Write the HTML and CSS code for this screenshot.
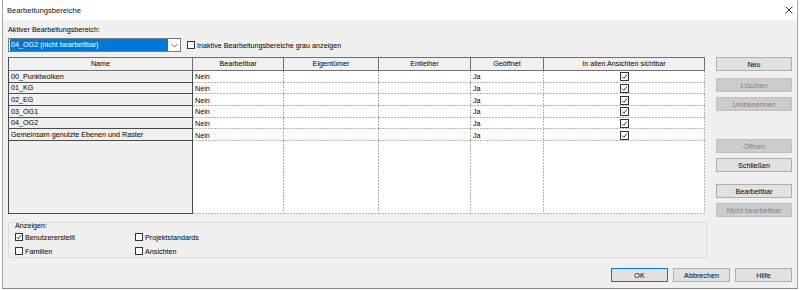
FILE: index.html
```html
<!DOCTYPE html>
<html lang="de">
<head>
<meta charset="utf-8">
<title>Bearbeitungsbereiche</title>
<link rel="stylesheet" href="styles.css">
</head>
<body>
<div class="window">
  <div class="titlebar">
    <span class="title">Bearbeitungsbereiche</span>
    <svg class="close" width="8" height="8" viewBox="0 0 8 8"><path d="M0.5 0.5 L7.5 7.5 M7.5 0.5 L0.5 7.5" stroke="#222" stroke-width="0.9" fill="none"/></svg>
  </div>
  <div class="content">
    <div class="label">Aktiver Bearbeitungsbereich:</div>
    <div class="toprow">
      <div class="combo">
        <span class="combo-sel">04_OG2 (nicht bearbeitbar)</span>
        <svg class="chev" width="7" height="5" viewBox="0 0 7 5"><path d="M0.5 1 L3.5 4 L6.5 1" stroke="#555" stroke-width="0.9" fill="none"/></svg>
      </div>
      <div class="check"><span class="box"></span><span>Inaktive Bearbeitungsbereiche grau anzeigen</span></div>
    </div>
    <div class="main">
      <div class="grid">
        <div class="hc first">Name</div>
        <div class="hc">Bearbeitbar</div>
        <div class="hc">Eigentümer</div>
        <div class="hc">Entleiher</div>
        <div class="hc">Geöffnet</div>
        <div class="hc">In allen Ansichten sichtbar</div>

        <div class="nc">00_Punktwolken</div><div class="dc">Nein</div><div class="dc"></div><div class="dc"></div><div class="dc">Ja</div><div class="dc cc"><span class="box tbox checked"><svg width="7" height="7" viewBox="0 0 7 7"><path d="M1 3.6 L2.8 5.4 L6 1.4" stroke="#222" stroke-width="0.9" fill="none"/></svg></span></div>
        <div class="nc">01_KG</div><div class="dc">Nein</div><div class="dc"></div><div class="dc"></div><div class="dc">Ja</div><div class="dc cc"><span class="box tbox checked"><svg width="7" height="7" viewBox="0 0 7 7"><path d="M1 3.6 L2.8 5.4 L6 1.4" stroke="#222" stroke-width="0.9" fill="none"/></svg></span></div>
        <div class="nc">02_EG</div><div class="dc">Nein</div><div class="dc"></div><div class="dc"></div><div class="dc">Ja</div><div class="dc cc"><span class="box tbox checked"><svg width="7" height="7" viewBox="0 0 7 7"><path d="M1 3.6 L2.8 5.4 L6 1.4" stroke="#222" stroke-width="0.9" fill="none"/></svg></span></div>
        <div class="nc">03_OG1</div><div class="dc">Nein</div><div class="dc"></div><div class="dc"></div><div class="dc">Ja</div><div class="dc cc"><span class="box tbox checked"><svg width="7" height="7" viewBox="0 0 7 7"><path d="M1 3.6 L2.8 5.4 L6 1.4" stroke="#222" stroke-width="0.9" fill="none"/></svg></span></div>
        <div class="nc">04_OG2</div><div class="dc">Nein</div><div class="dc"></div><div class="dc"></div><div class="dc">Ja</div><div class="dc cc"><span class="box tbox checked"><svg width="7" height="7" viewBox="0 0 7 7"><path d="M1 3.6 L2.8 5.4 L6 1.4" stroke="#222" stroke-width="0.9" fill="none"/></svg></span></div>
        <div class="nc">Gemeinsam genutzte Ebenen und Raster</div><div class="dc">Nein</div><div class="dc"></div><div class="dc"></div><div class="dc">Ja</div><div class="dc cc"><span class="box tbox checked"><svg width="7" height="7" viewBox="0 0 7 7"><path d="M1 3.6 L2.8 5.4 L6 1.4" stroke="#222" stroke-width="0.9" fill="none"/></svg></span></div>

        <div class="nc"></div><div class="dc"></div><div class="dc"></div><div class="dc"></div><div class="dc"></div><div class="dc"></div>
      </div>
      <div class="side">
        <div class="btn">Neu</div>
        <div class="btn dis gap7">Löschen</div>
        <div class="btn dis gap5">Umbenennen</div>
        <div class="btn dis gap28">Öffnen</div>
        <div class="btn gap5">Schließen</div>
        <div class="btn gap12">Bearbeitbar</div>
        <div class="btn dis gap5">Nicht bearbeitbar</div>
      </div>
    </div>
    <div class="group">
      <div class="group-label">Anzeigen:</div>
      <div class="group-grid">
        <div class="check"><span class="box checked"><svg width="6" height="6" viewBox="0 0 6 6"><path d="M0.8 3.1 L2.4 4.7 L5.2 1.2" stroke="#222" stroke-width="0.9" fill="none"/></svg></span><span>Benutzererstellt</span></div>
        <div class="check"><span class="box"></span><span>Projektstandards</span></div>
        <div class="check"><span class="box"></span><span>Familien</span></div>
        <div class="check"><span class="box"></span><span>Ansichten</span></div>
      </div>
    </div>
    <div class="footer">
      <div class="btn fbtn default">OK</div>
      <div class="btn fbtn">Abbrechen</div>
      <div class="btn fbtn">Hilfe</div>
    </div>
  </div>
</div>
</body>
</html>
```

FILE: styles.css
```css
html, body {
  margin: 0;
  padding: 0;
  background: #ffffff;
}
body {
  font-family: "Liberation Sans", Arial, sans-serif;
  font-size: 7.2px;
  color: #000;
  width: 800px;
  height: 290px;
  overflow: hidden;
}
.window {
  margin-left: 2px;
  width: 796px;
  height: 289px;
  box-sizing: border-box;
  border-left: 1px solid #a7a7a7;
  border-right: 1px solid #a7a7a7;
  border-bottom: 1px solid #8c8c8c;
  background: #f0f0f0;
  display: flex;
  flex-direction: column;
}
.titlebar {
  height: 20px;
  flex: none;
  background: #ffffff;
  display: flex;
  align-items: center;
  justify-content: space-between;
  padding: 0 4px 0 4px;
}
.title {
  font-size: 7.6px;
  color: #111;
}
.close {
  display: block;
}
.content {
  padding: 5px 5px 0 5px;
}
.label {
  height: 10px;
  line-height: 10px;
}
.toprow {
  margin-top: 3px;
  display: flex;
  align-items: center;
  height: 14px;
}
.combo {
  width: 173px;
  height: 14px;
  box-sizing: border-box;
  border: 1px solid #7a7a7a;
  background: #fff;
  display: flex;
  align-items: center;
  padding: 1px;
}
.combo-sel {
  width: 158px;
  height: 12px;
  line-height: 12px;
  background: #0078d7;
  color: #fff;
  padding-left: 1px;
  box-sizing: border-box;
}
.chev {
  margin-left: 3px;
}
.check {
  display: flex;
  align-items: center;
}
.toprow .check {
  margin-left: 6px;
}
.box {
  width: 8px;
  height: 8px;
  box-sizing: border-box;
  border: 1px solid #333;
  background: #fff;
  margin-right: 2px;
  display: flex;
  align-items: center;
  justify-content: center;
  flex: none;
}
.box svg {
  display: block;
}
.tbox {
  width: 9px;
  height: 9px;
  margin-right: 0;
}
.main {
  margin-top: 5px;
  height: 160px;
  display: flex;
  align-items: flex-start;
}
.grid {
  display: grid;
  grid-template-columns: 185px 91px 95px 92px 73px 161px;
  grid-template-rows: 14px repeat(6, 11.67px) 73px;
  width: 697px;
}
.grid > div {
  box-sizing: border-box;
  overflow: hidden;
  white-space: nowrap;
}
.hc {
  background: #f0f0f0;
  border-top: 1px solid #707070;
  border-right: 1px solid #707070;
  border-bottom: 1px solid #707070;
  text-align: center;
  line-height: 12px;
}
.hc.first {
  border-left: 1px solid #505050;
}
.nc {
  background: #f0f0f0;
  border-left: 1px solid #4a4a4a;
  border-right: 1px solid #4a4a4a;
  border-bottom: 1px solid #4a4a4a;
  padding-left: 2px;
  display: flex;
  align-items: center;
}
.dc {
  background:
    repeating-linear-gradient(to right, #b4b4b4 0 2px, transparent 2px 3px) left bottom / 100% 1px no-repeat,
    repeating-linear-gradient(to bottom, #b4b4b4 0 2px, transparent 2px 3px) right top / 1px 100% no-repeat,
    #ffffff;
  padding-left: 2px;
  display: flex;
  align-items: center;
}
.dc.cc {
  justify-content: center;
  padding-left: 0;
}
.side {
  margin-left: 11px;
  width: 76px;
  display: flex;
  flex-direction: column;
}
.btn {
  height: 14px;
  flex: none;
  box-sizing: border-box;
  border: 1px solid #adadad;
  background: #e1e1e1;
  display: flex;
  align-items: center;
  justify-content: center;
  white-space: nowrap;
}
.btn.dis {
  background: #cccccc;
  border-color: #bfbfbf;
  color: #838383;
}
.gap5 { margin-top: 5px; }
.gap7 { margin-top: 7px; }
.gap12 { margin-top: 12px; }
.gap28 { margin-top: 28px; }
.group {
  margin-top: 5px;
  width: 699px;
  height: 36px;
  box-sizing: border-box;
  border: 1px solid #dcdcdc;
  padding-left: 6px;
}
.group-label {
  height: 7px;
  line-height: 5px;
}
.group-grid {
  display: grid;
  grid-template-columns: 120px 120px;
  grid-auto-rows: 14px;
}
.footer {
  margin-top: 10px;
  display: flex;
  justify-content: flex-end;
  gap: 5px;
}
.fbtn {
  width: 57px;
}
.fbtn.default {
  border-color: #0078d7;
}
```
